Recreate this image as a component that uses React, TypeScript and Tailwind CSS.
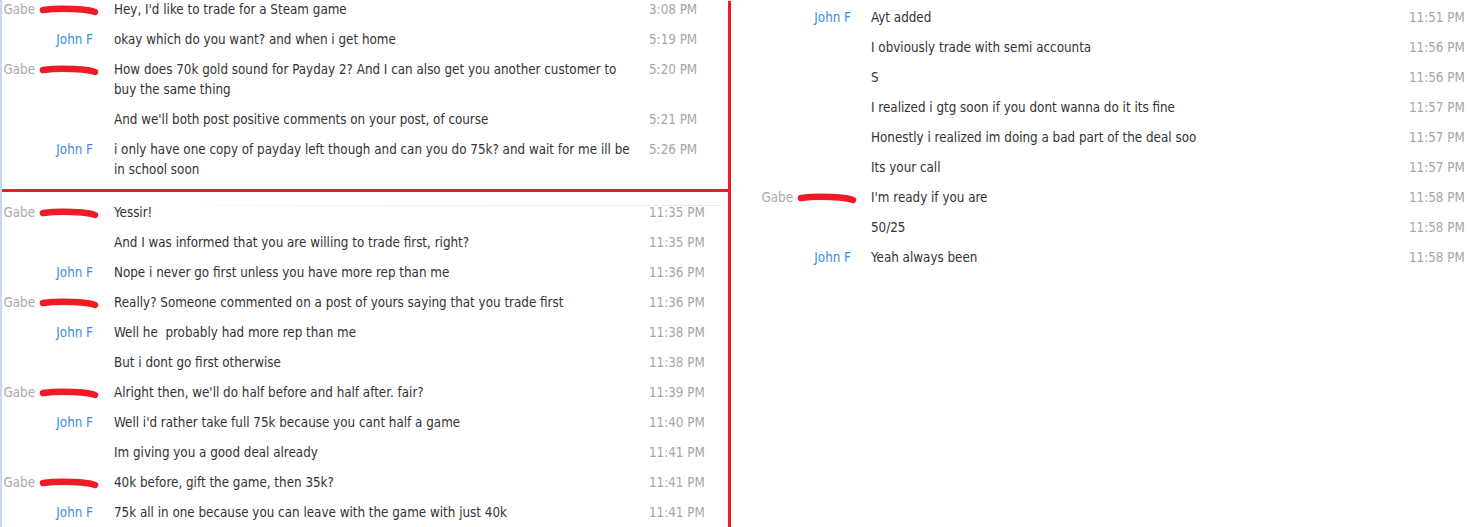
import React from "react";

type Msg = {
  who?: "gabe" | "john";
  lines: string[];
  time: string;
};

const topMsgs: Msg[] = [
  { who: "gabe", lines: ["Hey, I'd like to trade for a Steam game"], time: "3:08 PM" },
  { who: "john", lines: ["okay which do you want? and when i get home"], time: "5:19 PM" },
  {
    who: "gabe",
    lines: ["How does 70k gold sound for Payday 2? And I can also get you another customer to", "buy the same thing"],
    time: "5:20 PM",
  },
  { lines: ["And we'll both post positive comments on your post, of course"], time: "5:21 PM" },
  {
    who: "john",
    lines: ["i only have one copy of payday left though and can you do 75k? and wait for me ill be", "in school soon"],
    time: "5:26 PM",
  },
];

const bottomMsgs: Msg[] = [
  { who: "gabe", lines: ["Yessir!"], time: "11:35 PM" },
  { lines: ["And I was informed that you are willing to trade first, right?"], time: "11:35 PM" },
  { who: "john", lines: ["Nope i never go first unless you have more rep than me"], time: "11:36 PM" },
  { who: "gabe", lines: ["Really? Someone commented on a post of yours saying that you trade first"], time: "11:36 PM" },
  { who: "john", lines: ["Well he\u00a0 probably had more rep than me"], time: "11:38 PM" },
  { lines: ["But i dont go first otherwise"], time: "11:38 PM" },
  { who: "gabe", lines: ["Alright then, we'll do half before and half after. fair?"], time: "11:39 PM" },
  { who: "john", lines: ["Well i'd rather take full 75k because you cant half a game"], time: "11:40 PM" },
  { lines: ["Im giving you a good deal already"], time: "11:41 PM" },
  { who: "gabe", lines: ["40k before, gift the game, then 35k?"], time: "11:41 PM" },
  { who: "john", lines: ["75k all in one because you can leave with the game with just 40k"], time: "11:41 PM" },
];

const rightMsgs: Msg[] = [
  { who: "john", lines: ["Ayt added"], time: "11:51 PM" },
  { lines: ["I obviously trade with semi accounta"], time: "11:56 PM" },
  { lines: ["S"], time: "11:56 PM" },
  { lines: ["I realized i gtg soon if you dont wanna do it its fine"], time: "11:57 PM" },
  { lines: ["Honestly i realized im doing a bad part of the deal soo"], time: "11:57 PM" },
  { lines: ["Its your call"], time: "11:57 PM" },
  { who: "gabe", lines: ["I'm ready if you are"], time: "11:58 PM" },
  { lines: ["50/25"], time: "11:58 PM" },
  { who: "john", lines: ["Yeah always been"], time: "11:58 PM" },
];

// Red marker stroke scrawled over the surname
function Scribble() {
  return (
    <svg
      className="absolute left-[1px] top-[6px] overflow-visible"
      width="58"
      height="10"
      viewBox="0 0 58 10"
    >
      <path
        d="M3 4 C 14 2.5, 30 2.6, 42 3.6 C 48 4.2, 52 5, 55 6"
        fill="none"
        stroke="#ed1c24"
        strokeWidth="6.5"
        strokeLinecap="round"
      />
    </svg>
  );
}

function Name({ who }: { who?: "gabe" | "john" }) {
  if (who === "john") return <span className="text-[#3b8ee2]">John F</span>;
  if (who === "gabe")
    return (
      <span className="flex text-[#a9a9a9]">
        <span>Gabe</span>
        <span className="relative ml-[4px] inline-block w-[54px]">
          <Scribble />
        </span>
      </span>
    );
  return null;
}

function Row({ m, nameW, msgW }: { m: Msg; nameW: string; msgW: string }) {
  return (
    <div className="flex py-[5px] leading-[20px]">
      <div className={`${nameW} flex shrink-0 justify-end whitespace-nowrap`}>
        <Name who={m.who} />
      </div>
      <div className={`${msgW} shrink-0 text-[#333333]`}>
        {m.lines.map((l, i) => (
          <div key={i} className="whitespace-pre">
            {l}
          </div>
        ))}
      </div>
      <div className="whitespace-nowrap text-[#a6a6a6]">{m.time}</div>
    </div>
  );
}

export default function App() {
  return (
    <div
      className="flex h-[527px] w-[1467px] overflow-hidden bg-white text-[13.3px]"
      style={{ fontFamily: "Tahoma, 'DejaVu Sans Condensed', 'Liberation Sans', sans-serif" }}
    >
      {/* left window: two chat sessions split by a red rule */}
      <div className="flex w-[731px] shrink-0 border-l-2 border-[#c9d7ea]">
        <div className="flex w-[726px] flex-col">
          <div className="mt-[-5px] flex h-[194px] shrink-0 flex-col">
            {topMsgs.map((m, i) => (
              <Row key={i} m={m} nameW="w-[91px]" msgW="ml-[21px] w-[535px]" />
            ))}
          </div>
          <div className="h-[3px] w-[726px] shrink-0 bg-[#ed1c24]" />
          <div className="relative mt-[6px] flex flex-col">
            <div className="absolute left-[100px] top-[7px] h-px w-[620px] bg-gradient-to-r from-transparent via-[#f0f0f0] to-[#ebebeb]" />
            {bottomMsgs.map((m, i) => (
              <Row key={i} m={m} nameW="w-[91px]" msgW="ml-[21px] w-[535px]" />
            ))}
          </div>
        </div>
        <div className="mt-px w-[3px] bg-[#ed1c24]" />
      </div>

      {/* right window */}
      <div className="flex flex-1 flex-col pt-[3px]">
        {rightMsgs.map((m, i) => (
          <Row key={i} m={m} nameW="w-[120px]" msgW="ml-[20px] w-[538px]" />
        ))}
      </div>
    </div>
  );
}
